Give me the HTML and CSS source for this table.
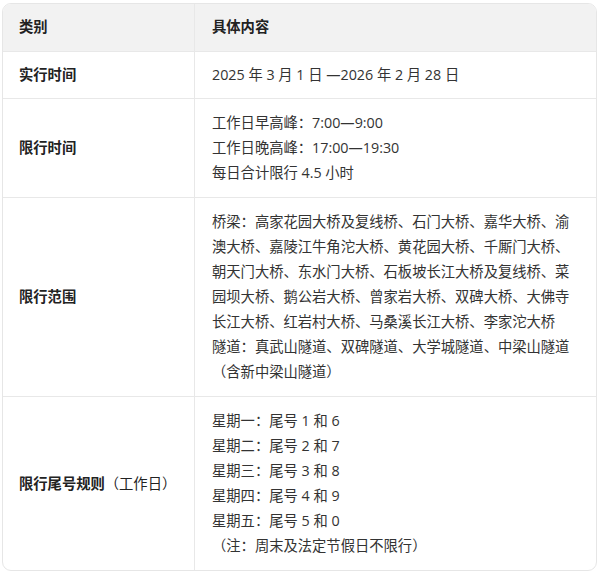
FILE: index.html
```html
<!DOCTYPE html>
<html lang="zh-CN">
<head>
<meta charset="utf-8">
<link rel="stylesheet" href="styles.css">
</head>
<body>
<div class="page">
  <div class="table">
    <div class="cell head label">类别</div>
    <div class="cell head content">具体内容</div>

    <div class="cell row1 label"><b>实行时间</b></div>
    <div class="cell row1 content">2025 年 3 月 1 日 —2026 年 2 月 28 日</div>

    <div class="cell label"><b>限行时间</b></div>
    <div class="cell content">工作日早高峰：7:00—9:00<br>工作日晚高峰：17:00—19:30<br>每日合计限行 4.5 小时</div>

    <div class="cell label"><b>限行范围</b></div>
    <div class="cell content">桥梁：高家花园大桥及复线桥、石门大桥、嘉华大桥、渝澳大桥、嘉陵江牛角沱大桥、黄花园大桥、千厮门大桥、朝天门大桥、东水门大桥、石板坡长江大桥及复线桥、菜园坝大桥、鹅公岩大桥、曾家岩大桥、双碑大桥、大佛寺长江大桥、红岩村大桥、马桑溪长江大桥、李家沱大桥<br>隧道：真武山隧道、双碑隧道、大学城隧道、中梁山隧道（含新中梁山隧道）</div>

    <div class="cell label last"><b>限行尾号规则</b>（工作日）</div>
    <div class="cell content last">星期一：尾号 1 和 6<br>星期二：尾号 2 和 7<br>星期三：尾号 3 和 8<br>星期四：尾号 4 和 9<br>星期五：尾号 5 和 0<br>（注：周末及法定节假日不限行）</div>
  </div>
</div>
</body>
</html>
```

FILE: styles.css
```css
* { box-sizing: border-box; }
html, body {
  margin: 0;
  padding: 0;
  background: #ffffff;
}
body {
  font-family: "Open Sans", "Noto Sans CJK SC", sans-serif;
  font-size: 14.3px;
  color: #333333;
}
.page {
  padding: 3px 3px 0 2px;
}
.table {
  display: grid;
  grid-template-columns: 192px 1fr;
  border: 1px solid #e6e6e6;
  border-radius: 9px;
  overflow: hidden;
}
.cell {
  line-height: 25px;
  padding: 11px 16px 12px 16px;
  border-bottom: 1px solid #e8e8e8;
}
.cell.last {
  border-bottom: none;
}
.label {
  border-right: 1px solid #e8e8e8;
  display: flex;
  align-items: center;
  color: #222222;
}
.label b {
  font-weight: 700;
}
.content {
  padding-left: 17px;
  padding-right: 15px;
}
.head {
  background: #f2f2f2;
  font-weight: 700;
  color: #222222;
  padding-top: 10px;
  padding-bottom: 12px;
}
.row1 {
  padding-top: 10px;
  padding-bottom: 11px;
}
```
